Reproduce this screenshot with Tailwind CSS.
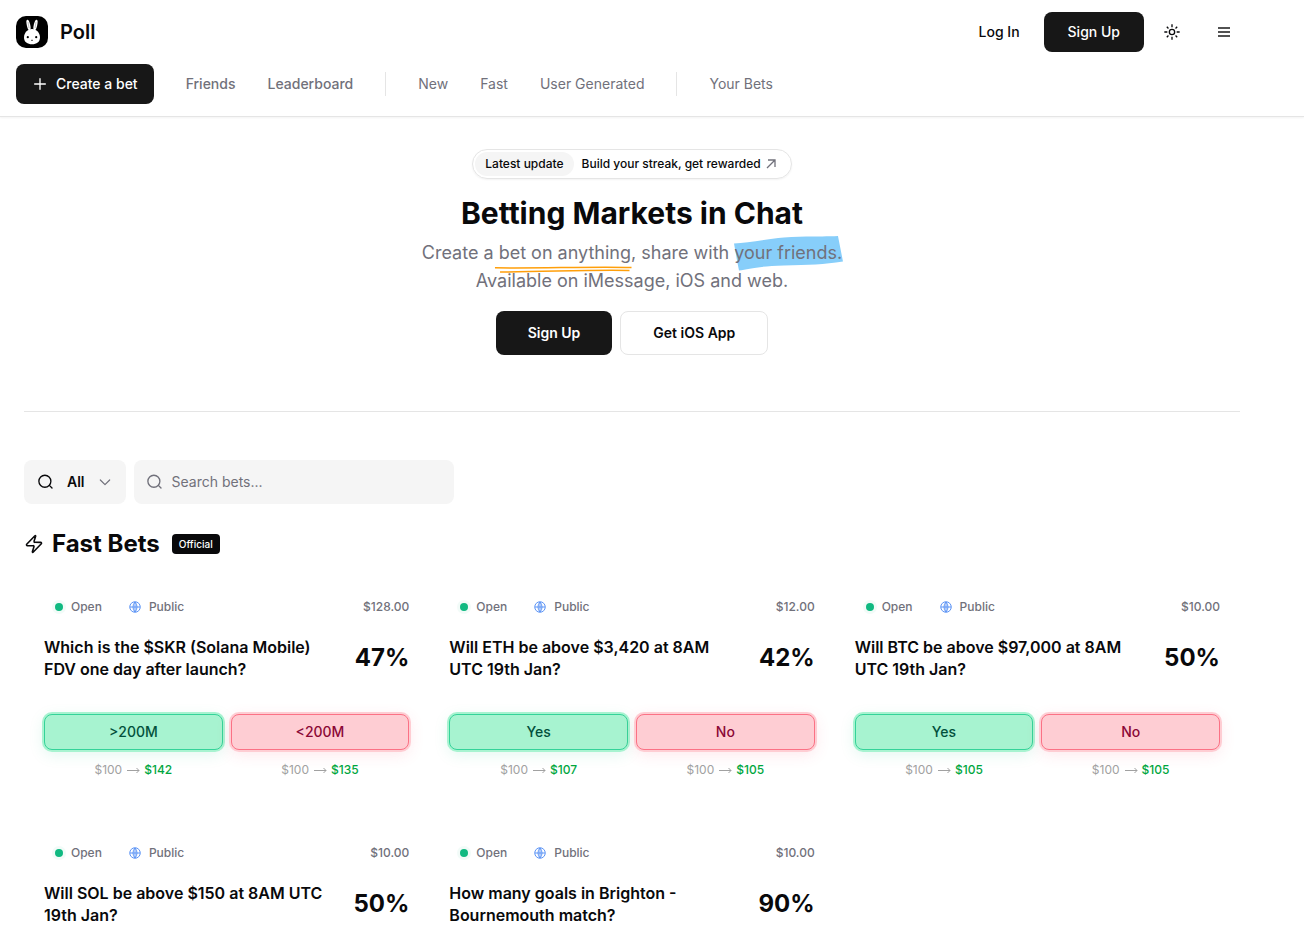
<!DOCTYPE html>
<html lang="en">
<head>
    <meta charset="UTF-8">
    <meta name="viewport" content="width=device-width, initial-scale=1">
    <title>Poll</title>
    <script src="https://cdn.jsdelivr.net/npm/@tailwindcss/browser@4"></script>
</head>
<body class="bg-white text-zinc-950 font-['Inter',sans-serif] overflow-x-hidden">
    <header class="border-b border-neutral-200 shadow-xs py-3 pl-4 pr-14 flex flex-col gap-3">
        <div class="flex items-center justify-between">
            <a href="#" class="flex items-center gap-3">
                <svg class="size-8" viewBox="0 0 32 32" aria-hidden="true">
                    <rect width="32" height="32" rx="10" fill="#000"/>
                    <ellipse cx="12.500" cy="9" rx="1.700" ry="5.400" fill="#fff" transform="rotate(-13 12.500 9)"/>
                    <ellipse cx="19.500" cy="9" rx="1.700" ry="5.400" fill="#fff" transform="rotate(13 19.500 9)"/>
                    <path d="M12 6l1 6M20 6l-1 6" stroke="#aaa" stroke-width=".7"/>
                    <path d="M16 13c4.500 0 8 4 8 8.500s-3.500 6.800-8 6.800-8-2.300-8-6.800S11.500 13 16 13z" fill="#fff"/>
                    <circle cx="11.800" cy="21.200" r="1.100"/>
                    <circle cx="20.200" cy="21.200" r="1.100"/>
                    <path d="M15.300 24h1.400l-.7.800z" stroke="#000" stroke-width=".4"/>
                </svg>
                <span class="text-xl font-semibold">Poll</span>
            </a>
            <div class="flex items-center gap-2">
                <button class="h-10 px-4 text-sm font-medium">Log In</button>
                <button class="h-10 px-6 rounded-lg bg-neutral-900 text-white text-sm font-medium">Sign Up</button>
                <button class="size-10 flex items-center justify-center" aria-label="Theme">
                    <svg class="size-4" viewBox="0 0 24 24" fill="none" stroke="currentColor" stroke-width="2" stroke-linejoin="round"><circle cx="12" cy="12" r="4"/><path d="M12 .5v4.500M12 19v4.500M4.200 4.200l2.500 2.500M17.300 17.300l2.500 2.500M.5 12H5M19 12h4.500M6.700 17.300l-2.500 2.500M19.800 4.200l-2.500 2.500"/></svg>
                </button>
                <button class="h-10 px-4 text-neutral-600" aria-label="Menu">
                    <svg class="size-4" viewBox="0 0 16 16" fill="none" stroke="currentColor" stroke-width="2"><path d="M2 4h12M2 8h12M2 12h12"/></svg>
                </button>
            </div>
        </div>
        <nav class="flex items-center gap-8 text-sm text-zinc-500">
            <button class="h-10 px-4 rounded-lg bg-neutral-900 text-white font-medium flex items-center gap-2">
                <svg class="size-4" viewBox="0 0 24 24" fill="none" stroke="currentColor" stroke-width="2" stroke-linecap="round"><path d="M4 12h16M12 4v16"/></svg>
                Create a bet
            </button>
            <a href="#" class="font-medium">Friends</a>
            <a href="#" class="font-medium">Leaderboard</a>
            <span class="w-px h-6 bg-neutral-200"></span>
            <a href="#">New</a>
            <a href="#">Fast</a>
            <a href="#">User Generated</a>
            <span class="w-px h-6 bg-neutral-200"></span>
            <a href="#">Your Bets</a>
        </nav>
    </header>

    <main class="pl-6 pr-16">
        <section class="pt-8 pb-14 flex flex-col items-center text-center border-b border-neutral-200">
            <a href="#" class="flex items-center gap-2 h-[30px] pl-0.5 pr-3.5 border border-neutral-200 rounded-full shadow-xs text-xs font-medium">
                <span class="bg-neutral-100 rounded-full px-2.5 py-1">Latest update</span>
                <span class="flex items-center gap-1">
                    Build your streak, get rewarded
                    <svg class="size-3 text-zinc-500" viewBox="0 0 12 12" fill="none" stroke="currentColor" stroke-width="1.300"><path d="M2 10l8-8M3 2h7v7"/></svg>
                </span>
            </a>
            <h1 class="mt-4 text-3xl font-bold">Betting Markets in Chat</h1>
            <p class="mt-2 text-lg leading-7 text-zinc-500">
                Create a
                <span class="relative inline-block">bet on anything,
                    <svg class="absolute left-0 top-6 w-full h-3 overflow-visible" viewBox="0 0 136 12" preserveAspectRatio="none" fill="none" stroke="#ff9f0a" stroke-width="1.500"><path d="M-4 4.800C40 5.500 90 3.500 131 4.500M1 9C45 9 90 6.500 129 7.500"/></svg>
                </span>
                share with
                <span class="relative inline-block">
                    <svg class="absolute left-0 -top-1 w-full h-9 overflow-visible" viewBox="0 0 108 36" preserveAspectRatio="none" fill="#87cefa"><path d="M0 8.500C13 8 30 4.500 50 2.500S90 2 104 1l5 25.500C90 29.500 75 30 50 30.500S15 34 5 35.500L3.500 28z"/></svg>
                    <span class="relative">your friends.</span>
                </span>
                <br>Available on iMessage, iOS and web.
            </p>
            <div class="mt-4 flex gap-2 text-sm font-semibold">
                <button class="h-11 px-8 rounded-lg bg-neutral-900 text-white">Sign Up</button>
                <button class="h-11 px-8 rounded-lg border border-neutral-200">Get iOS App</button>
            </div>
        </section>

        <section class="pt-12">
            <div class="flex gap-2">
                <button class="h-11 px-[13px] rounded-lg bg-neutral-100 flex items-center gap-3 text-sm font-semibold">
                    <svg class="size-[18px]" viewBox="0 0 24 24" fill="none" stroke="currentColor" stroke-width="1.800" stroke-linecap="round"><circle cx="10.500" cy="11" r="8"/><path d="m20 20-3.500-3.500"/></svg>
                    <span>All</span>
                    <svg class="size-4 text-zinc-500" viewBox="0 0 24 24" fill="none" stroke="currentColor" stroke-width="1.800" stroke-linecap="round" stroke-linejoin="round"><path d="m5 9 7 7 7-7"/></svg>
                </button>
                <label class="h-11 w-80 px-3 rounded-lg bg-neutral-100 flex items-center gap-2 text-zinc-500">
                    <svg class="size-[18px]" viewBox="0 0 24 24" fill="none" stroke="currentColor" stroke-width="1.800" stroke-linecap="round"><circle cx="10.500" cy="11" r="8"/><path d="m20 20-3.500-3.500"/></svg>
                    <input type="text" placeholder="Search bets..." aria-label="Search bets" class="flex-1 min-w-0 bg-transparent outline-none text-sm placeholder:text-zinc-500">
                </label>
            </div>
            <div class="mt-6 flex items-center">
                <svg class="size-5" viewBox="0 0 24 24" fill="none" stroke="currentColor" stroke-width="1.900" stroke-linecap="round" stroke-linejoin="round"><path d="M4 14a1 1 0 0 1-.780-1.630l9.900-10.200a.5.5 0 0 1 .860.460l-1.920 6.020A1 1 0 0 0 13 10h7a1 1 0 0 1 .780 1.630l-9.900 10.200a.5.5 0 0 1-.860-.460l1.920-6.020A1 1 0 0 0 11 14z"/></svg>
                <h2 class="ml-2 text-2xl font-bold">Fast Bets</h2>
                <span class="ml-3 h-5 px-[7px] rounded bg-zinc-950 text-white text-[10px] leading-5 font-medium">Official</span>
            </div>
            <div id="bets" class="mt-5 grid grid-cols-3"></div>
        </section>
    </main>

    <script>
    const bets = [
        { title: 'Which is the $SKR (Solana Mobile) FDV one day after launch?', volume: '$128.00', chance: 47, yes: '>200M', no: '<200M', yesPay: 142, noPay: 135 },
        { title: 'Will ETH be above $3,420 at 8AM UTC 19th Jan?', volume: '$12.00', chance: 42, yes: 'Yes', no: 'No', yesPay: 107, noPay: 105 },
        { title: 'Will BTC be above $97,000 at 8AM UTC 19th Jan?', volume: '$10.00', chance: 50, yes: 'Yes', no: 'No', yesPay: 105, noPay: 105 },
        { title: 'Will SOL be above $150 at 8AM UTC 19th Jan?', volume: '$10.00', chance: 50 },
        { title: 'How many goals in Brighton - Bournemouth match?', volume: '$10.00', chance: 90 }
    ];

    const arrow = `<svg class="w-3.5 h-3" viewBox="0 0 14 12" fill="none" stroke="currentColor"><path d="M1 6.500h12M10.500 4l2.500 2.500L10.500 9"/></svg>`;
    const payout = (amount) => `<p class="mt-3 flex items-center justify-center gap-1 text-xs text-neutral-400">$100 ${arrow} <span class="font-medium text-green-600">$${amount}</span></p>`;
    const escapeText = (s) => s.replace('<', '&lt;').replace('>', '&gt;');

    const outcomes = (b) => !b.yes ? '' : `
            <div class="mt-[34px] grid grid-cols-2 gap-2">
                <div>
                    <button class="w-full h-9 rounded-lg border border-[#34d399] bg-[#a7f3d0] text-emerald-900 text-sm font-medium shadow-[0_0_0_2px_#a7f3d0,0_4px_16px_#10b98122]">${escapeText(b.yes)}</button>
                    ${payout(b.yesPay)}
                </div>
                <div>
                    <button class="w-full h-9 rounded-lg border border-[#fb7185] bg-[#fecdd3] text-rose-900 text-sm font-medium shadow-[0_0_0_2px_#fecdd3,0_4px_16px_#f43f5e22]">${escapeText(b.no)}</button>
                    ${payout(b.noPay)}
                </div>
            </div>`;

    document.getElementById('bets').innerHTML = bets.map(b => `
        <article class="px-5 pt-[19px] ${b.yes ? 'pb-12' : ''}">
            <div class="flex items-center h-4 text-xs font-medium text-zinc-500">
                <span class="ml-[11px] size-2 rounded-full bg-[#10b981] ring-3 ring-emerald-500/5"></span>
                <span class="ml-2">Open</span>
                <svg class="ml-[27px] size-3 text-[#5b93f5]" viewBox="0 0 24 24" fill="none" stroke="currentColor" stroke-width="2"><circle cx="12" cy="12" r="10.500"/><path d="M12 2a14.500 14.500 0 0 0 0 20 14.500 14.500 0 0 0 0-20M2 12h20M12 2v20"/></svg>
                <span class="ml-2">Public</span>
                <span class="ml-auto">${b.volume}</span>
            </div>
            <div class="mt-[21px] flex items-center justify-between gap-6">
                <h3 class="text-base leading-[22px] font-semibold">${b.title}</h3>
                <span class="text-2xl font-bold">${b.chance}%</span>
            </div>${outcomes(b)}
        </article>`).join('');
    </script>
</body>
</html>
